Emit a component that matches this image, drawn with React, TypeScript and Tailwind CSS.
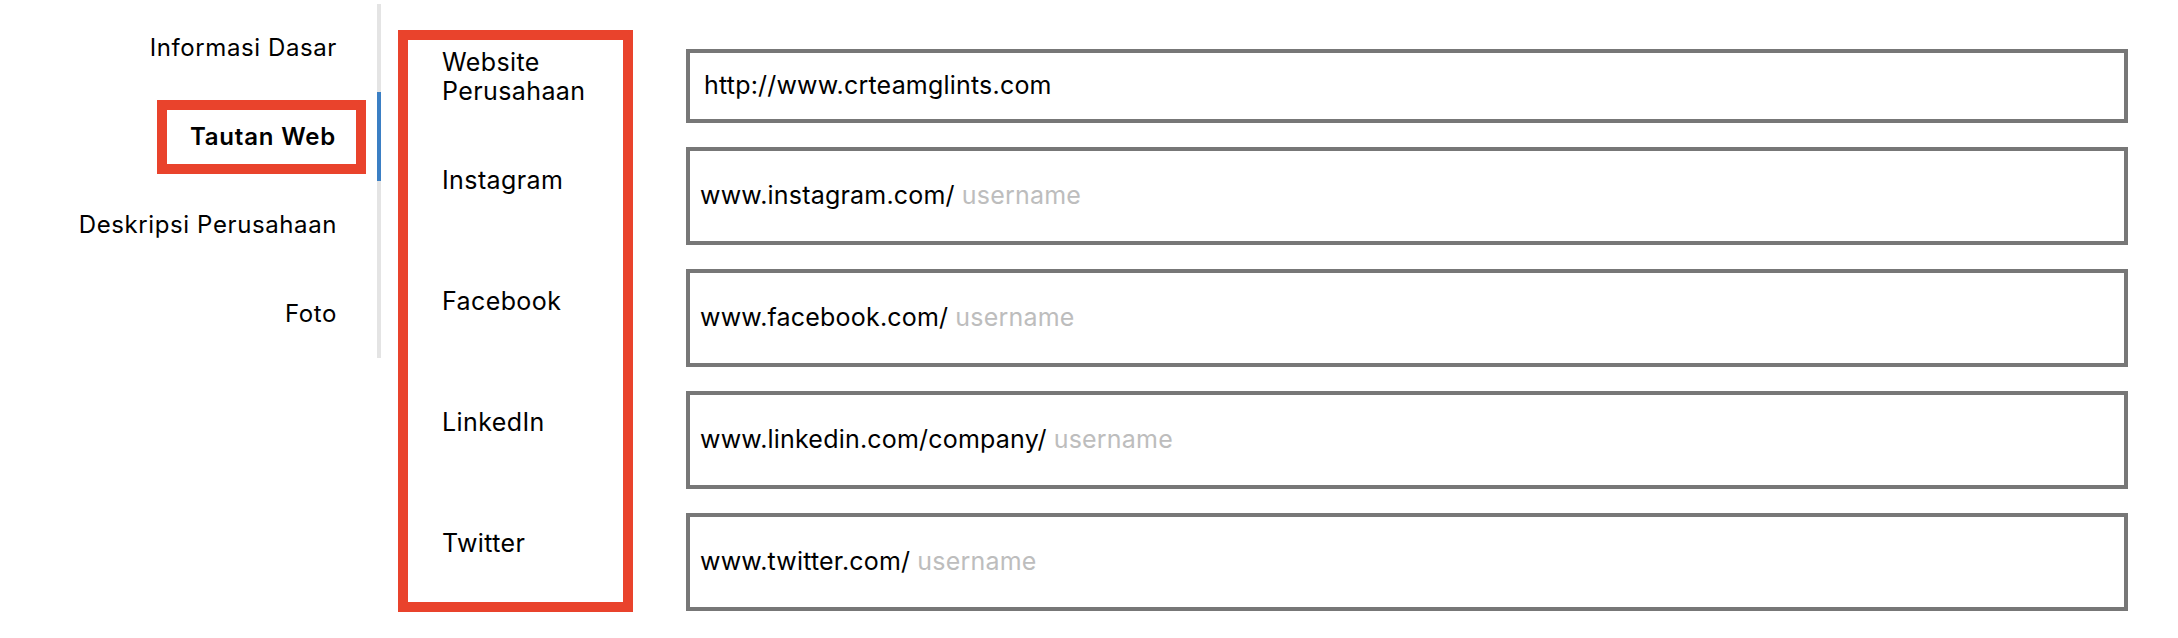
import React from 'react';

const navItems = [
  { label: 'Informasi Dasar', h: 'h-[88px]' },
  { label: 'Tautan Web', h: 'h-[89px]', active: true },
  { label: 'Deskripsi Perusahaan', h: 'h-[88px]' },
  { label: 'Foto', h: 'h-[89px]' },
];

const links = [
  { prefix: 'www.instagram.com/' },
  { prefix: 'www.facebook.com/' },
  { prefix: 'www.linkedin.com/company/' },
  { prefix: 'www.twitter.com/' },
];

export default function App() {
  return (
    <div className="flex h-[638px] w-full bg-white font-['Inter',sans-serif] text-black">
      {/* side menu */}
      <nav className="mt-[4px] flex w-[381px] flex-col self-start text-[24px] tracking-[0.6px]">
        {navItems.map((item) =>
          item.active ? (
            <div
              key={item.label}
              className={`${item.h} flex items-center justify-end border-r-4 border-[#3b7fc4] pr-[11px]`}
            >
              <span className="flex h-[74px] items-center border-[10px] border-[#e9432c] pl-[23px] pr-[20px] font-semibold tracking-[0.8px]">
                {item.label}
              </span>
            </div>
          ) : (
            <div
              key={item.label}
              className={`${item.h} flex items-center justify-end border-r-4 border-[#e4e4e4] pr-[40px]`}
            >
              {item.label}
            </div>
          )
        )}
      </nav>

      {/* labels */}
      <div className="ml-[17px] mt-[30px] h-[582px] w-[235px] border-[10px] border-[#e9432c] pl-[34px] pt-[8px] text-[25px] leading-[29px] tracking-[0.4px]">
        <div>
          Website
          <br />
          Perusahaan
        </div>
        <div className="mt-[60px]">Instagram</div>
        <div className="mt-[92px]">Facebook</div>
        <div className="mt-[92px]">LinkedIn</div>
        <div className="mt-[92px]">Twitter</div>
      </div>

      {/* inputs */}
      <div className="ml-[53px] mt-[49px] flex w-[1442px] flex-col gap-[24px] self-start text-[25px] tracking-[0.2px]">
        <div className="flex h-[74px] items-center border-4 border-[#777777] pl-[14px]">
          http://www.crteamglints.com
        </div>
        {links.map((l) => (
          <div key={l.prefix} className="flex h-[98px] items-center border-4 border-[#777777] pl-[10px]">
            <span>{l.prefix}</span>
            <span className="ml-[7px] text-[#bdbdbd]">username</span>
          </div>
        ))}
      </div>
    </div>
  );
}
